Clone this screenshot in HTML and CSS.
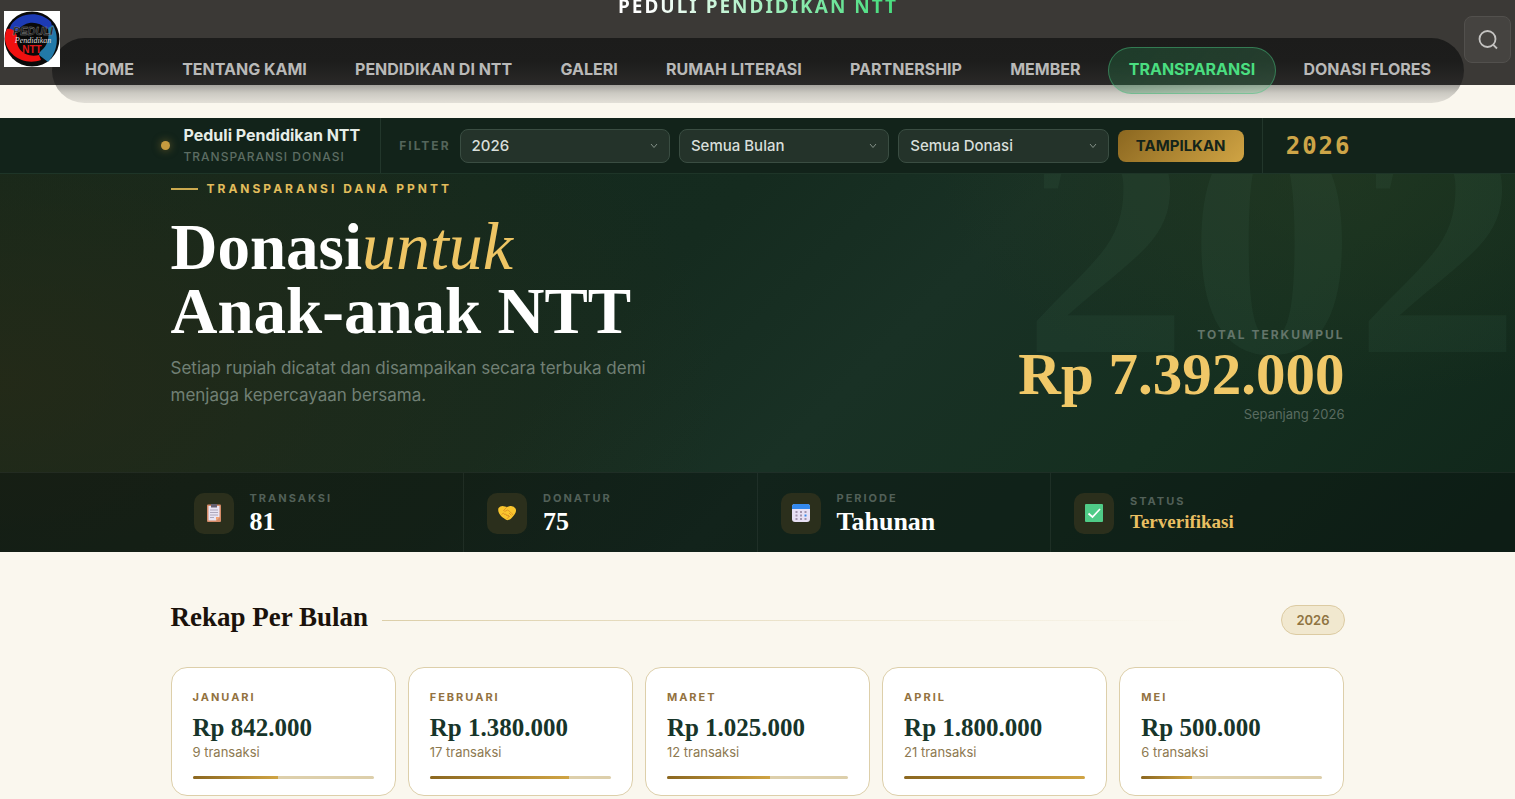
FILE: index.html
```html
<!DOCTYPE html>
<html lang="id">
<head>
<meta charset="utf-8">
<meta name="viewport" content="width=device-width, initial-scale=1">
<title>Transparansi Donasi - Peduli Pendidikan NTT</title>
<link rel="stylesheet" href="styles.css">
</head>
<body>
<header class="site-header">
  <a class="logo" href="#" aria-label="Beranda">
    <svg viewBox="0 0 56 56" width="56" height="56">
      <rect width="56" height="56" fill="#fff"/>
      <circle cx="28" cy="28" r="27.500" fill="#090909"/>
      <path d="M7 14C15 2 35-1 47 11l1 4-5 3C34 10 22 9 13 20L5 19Z" fill="#1d3bb5"/>
      <path d="M3 18c4-1 8 1 10 7-2 14 9 22 22 19l2 5C20 55 3 44 1 29c0-4 0-8 2-11Z" fill="#f01010"/>
      <path d="M49 14c7 12 4 28-5 37l-9-7c0-3 2-4 4-6 6-6 6-13 5-21Z" fill="#2279a8"/>
      <text class="logo-a" x="29" y="24" text-anchor="middle">PEDULI</text>
      <text class="logo-b" x="29" y="32" text-anchor="middle">Pendidikan</text>
      <text class="logo-c" x="28" y="42" text-anchor="middle">NTT</text>
    </svg>
  </a>
  <div class="header-main">
    <p class="site-title"><span>PEDULI PENDIDIKAN NTT</span></p>
    <nav class="main-nav">
      <a href="#">HOME</a>
      <a href="#">TENTANG KAMI</a>
      <a href="#">PENDIDIKAN DI NTT</a>
      <a href="#">GALERI</a>
      <a href="#">RUMAH LITERASI</a>
      <a href="#">PARTNERSHIP</a>
      <a href="#">MEMBER</a>
      <a href="#" class="active">TRANSPARANSI</a>
      <a href="#">DONASI FLORES</a>
    </nav>
  </div>
  <button class="search" type="button" aria-label="Cari">
    <svg viewBox="0 0 20 20" width="20" height="20" fill="none" stroke="#c4c3c1" stroke-width="1.800"><circle cx="9.500" cy="9" r="8"/><path d="m15.300 14.800 3.700 3.700"/></svg>
  </button>
</header>

<main>
<form class="filter-bar">
  <div class="filter-inner">
    <div class="brand">
      <span class="dot"></span>
      <div><strong>Peduli Pendidikan NTT</strong><small>TRANSPARANSI DONASI</small></div>
    </div>
    <div class="filters">
      <label class="filter-label" for="tahun">FILTER</label>
      <div class="select-box">
        <select id="tahun"><option>2026</option></select>
        <svg viewBox="0 0 8 6" width="8" height="6"><path d="m1 1 3 3.500 3-3.500"/></svg>
      </div>
      <div class="select-box">
        <select aria-label="Bulan"><option>Semua Bulan</option></select>
        <svg viewBox="0 0 8 6" width="8" height="6"><path d="m1 1 3 3.500 3-3.500"/></svg>
      </div>
      <div class="select-box">
        <select aria-label="Jenis donasi"><option>Semua Donasi</option></select>
        <svg viewBox="0 0 8 6" width="8" height="6"><path d="m1 1 3 3.500 3-3.500"/></svg>
      </div>
      <button class="submit" type="button">TAMPILKAN</button>
    </div>
    <div class="year">2026</div>
  </div>
</form>

<section class="hero">
  <div class="watermark" aria-hidden="true">2026</div>
  <div class="hero-inner">
    <div>
      <p class="eyebrow">TRANSPARANSI DANA PPNTT</p>
      <h1>Donasi<em>untuk</em><br>Anak-anak NTT</h1>
      <p class="lead">Setiap rupiah dicatat dan disampaikan secara terbuka demi menjaga kepercayaan bersama.</p>
    </div>
    <div class="total">
      <p class="total-label">TOTAL TERKUMPUL</p>
      <p class="total-amount">Rp 7.392.000</p>
      <p class="total-note">Sepanjang 2026</p>
    </div>
  </div>
  <div class="stats">
    <div class="stats-inner">
      <div class="stat">
        <span class="stat-icon"><svg viewBox="0 0 18 18" width="18" height="18"><rect x="2" y="0.500" width="14" height="17.500" rx="1" fill="#d58b68"/><path d="M3.500 2h11v11l-3.500 3.500H3.500z" fill="#e9e4f3"/><path d="M11 16.500V13h3.500z" fill="#f5a06f"/><path d="M6 0h6v3.500H6z" fill="#655f70"/><path d="M5 6h8M5 8.500h8M5 11h8M5 13.500h4" stroke="#a79fb6" stroke-width=".9"/></svg></span>
        <div><p class="stat-label">TRANSAKSI</p><p class="stat-value">81</p></div>
      </div>
      <div class="stat">
        <span class="stat-icon"><svg viewBox="0 0 18 18" width="18" height="18"><path d="M.500 4Q3 1 7 2.500L9 3l3-1q4-.500 5.500 2.500c1.500 3-.500 6-3 8.500-2 2.500-4 3.500-6 3L4 13C1 10-.500 7 .500 4Z" fill="#f9c52e"/><path d="M9 3 5.500 6.500q1 2 4-.500c2 1 4 3 5.500 5M3.500 10.500l2-1.500 1 1.500 1.500-.500.500 1.500 1.500-.300.500 2-2 2M12 13l-2-2M13.500 11.500l-2.500-2.500" fill="none" stroke="#d98520" stroke-width=".7"/></svg></span>
        <div><p class="stat-label">DONATUR</p><p class="stat-value">75</p></div>
      </div>
      <div class="stat">
        <span class="stat-icon"><svg viewBox="0 0 18 18" width="18" height="18"><rect width="18" height="18" rx="3" fill="#e7e0f4"/><path d="M0 5V2.500Q0 0 2.500 0h13Q18 0 18 2.500V5z" fill="#3489ee"/><g fill="#a294ad"><path d="M3.500 7h2v2h-2zM8 7h2v2H8zM3.500 10.500h2v2h-2zM8 10.500h2v2H8zM3.500 14h2v2h-2zM8 14h2v2H8zM12.500 7h2v2h-2zM12.500 14h2v2h-2z"/></g><path d="M12.500 10.500h2v2h-2z" fill="#3489ee"/></svg></span>
        <div><p class="stat-label">PERIODE</p><p class="stat-value">Tahunan</p></div>
      </div>
      <div class="stat">
        <span class="stat-icon"><svg viewBox="0 0 18 18" width="18" height="18"><rect width="18" height="18" rx="1" fill="#4fcb87"/><path d="m3.500 9.500 4 3.500L15 5" fill="none" stroke="#fff" stroke-width="1.700"/></svg></span>
        <div><p class="stat-label">STATUS</p><p class="stat-value verified">Terverifikasi</p></div>
      </div>
    </div>
  </div>
</section>

<section class="recap">
  <div class="recap-head">
    <h2>Rekap Per Bulan</h2>
    <span class="rule"></span>
    <span class="badge">2026</span>
  </div>
  <div class="cards">
    <article class="card"><h3>JANUARI</h3><p class="amount">Rp 842.000</p><p class="count">9 transaksi</p><div class="bar"><div style="width:47%"></div></div></article>
    <article class="card"><h3>FEBRUARI</h3><p class="amount">Rp 1.380.000</p><p class="count">17 transaksi</p><div class="bar"><div style="width:77%"></div></div></article>
    <article class="card"><h3>MARET</h3><p class="amount">Rp 1.025.000</p><p class="count">12 transaksi</p><div class="bar"><div style="width:57%"></div></div></article>
    <article class="card"><h3>APRIL</h3><p class="amount">Rp 1.800.000</p><p class="count">21 transaksi</p><div class="bar"><div style="width:100%"></div></div></article>
    <article class="card"><h3>MEI</h3><p class="amount">Rp 500.000</p><p class="count">6 transaksi</p><div class="bar"><div style="width:28%"></div></div></article>
  </div>
</section>
</main>
</body>
</html>
```
FILE: styles.css
```css
* { box-sizing: border-box; }
body {
  margin: 0;
  background: #faf7ee;
  color: #1a120b;
  font-family: Inter, "Liberation Sans", sans-serif;
  overflow-x: hidden;
}
p, h1, h2, h3 { margin: 0; }
a { color: inherit; text-decoration: none; }

/* Header */
.site-header {
  display: flex;
  justify-content: space-between;
  height: 85px;
  margin-bottom: 33px;
  padding: 0 4px;
  background: #3b3936;
}
.logo { flex: none; width: 48px; margin-top: 11px; }
.logo svg { display: block; overflow: visible; position: relative; z-index: 2; width: 56px; }
.logo-a { font: italic bold 11px "Liberation Sans", sans-serif; fill: #111; stroke: #888; stroke-width: .4; }
.logo-b { font: italic 8px "Liberation Serif", serif; fill: #ddd; }
.logo-c { font: bold 10px "Liberation Sans", sans-serif; fill: #e01818; }
.header-main { flex: 1; min-width: 0; }
.site-title {
  margin-top: -8px;
  height: 46px;
  text-align: center;
  font: 700 19px/28px "Noto Sans", sans-serif;
  letter-spacing: 2px;
}
.site-title span {
  background: linear-gradient(90deg, #fff 10%, #4ade80 95%);
  background-clip: text;
  -webkit-background-clip: text;
  color: transparent;
}
.main-nav {
  display: flex;
  justify-content: space-between;
  padding: 9px 12px;
  border-radius: 33px;
  background: linear-gradient(#1c1c1b 0, #1d1d1c 24px, #2a2928 47px, #a5a39e 47px, #cbc9c2 55px, #e2dfd7 65px);
}
.main-nav a {
  padding: 0 20px 2px;
  border: 1px solid transparent;
  border-radius: 24px;
  font-size: 16px;
  font-weight: 700;
  line-height: 43px;
  color: #b9b9b8;
  white-space: nowrap;
}
.main-nav .active {
  color: #4ade80;
  border-color: rgba(74, 200, 130, .45);
  background: linear-gradient(135deg, rgba(34, 120, 70, .35), rgba(74, 190, 120, .2));
}
.search {
  display: grid;
  place-items: center;
  flex: none;
  width: 47px;
  height: 47px;
  margin-top: 16px;
  padding: 0;
  border: 1px solid #52504d;
  border-radius: 8px;
  background: #454340;
}

/* Filter bar */
.filter-bar { background: #12231a; border-bottom: 1px solid #1e3528; }
.filter-inner {
  display: flex;
  max-width: 1194px;
  height: 55px;
  margin: 0 auto;
}
.brand {
  display: flex;
  align-items: center;
  gap: 14px;
  padding-right: 20px;
  border-right: 1px solid #22362b;
}
.brand strong { display: block; font-size: 16px; line-height: 20px; color: #e6ede7; white-space: nowrap; }
.brand small { display: block; padding-top: 2px; font-size: 12px; font-weight: 500; line-height: 20px; letter-spacing: 1px; color: #5d6d63; white-space: nowrap; }
.dot { width: 9px; height: 9px; border-radius: 50%; background: #c59a3f; box-shadow: 0 0 8px rgba(201, 155, 60, .5); }
.filters { flex: 1; display: flex; align-items: center; gap: 9px; padding: 0 18px; }
.filter-label { font-size: 12px; font-weight: 700; letter-spacing: 2px; color: #54655b; }
.select-box { flex: 1; display: grid; align-items: center; }
.select-box select {
  grid-area: 1 / 1;
  appearance: none;
  width: 100%;
  height: 34px;
  padding: 0 11px;
  border: 1px solid #3a4d42;
  border-radius: 8px;
  background: #24332a;
  color: #d8dfda;
  font: 500 15px Inter, sans-serif;
}
.select-box svg { grid-area: 1 / 1; justify-self: end; margin-right: 12px; pointer-events: none; fill: none; stroke: #849188; }
.submit {
  width: 126px;
  height: 32px;
  padding: 0;
  border: 0;
  border-radius: 8px;
  background: linear-gradient(135deg, #8b6720, #d0a444);
  color: #14241a;
  font: 700 15px Inter, sans-serif;
}
.year {
  padding: 0 3px 0 23px;
  border-left: 1px solid #22362b;
  font: bold 24px/56px "DejaVu Sans Mono", monospace;
  letter-spacing: 2px;
  color: #cda548;
}

/* Hero */
.hero {
  position: relative;
  overflow: hidden;
  background:
    radial-gradient(ellipse 48% 110% at 0 55%, rgba(42, 42, 22, .7), transparent),
    radial-gradient(ellipse 26% 60% at 88% 0, rgba(40, 60, 32, .5), transparent),
    linear-gradient(135deg, #12281c 0%, #152b1f 40%, #193125 56%, #152f20 75%, #10261a 100%);
}
.watermark {
  position: absolute;
  top: -100px;
  left: 67.5%;
  font: bold 332px/332px "Liberation Serif", serif;
  color: rgba(120, 180, 150, .06);
}
.hero-inner {
  display: flex;
  justify-content: space-between;
  align-items: flex-end;
  max-width: 1174px;
  margin: 0 auto;
  padding: 6px 0 49px;
  position: relative;
}
.eyebrow {
  display: flex;
  align-items: center;
  gap: 9px;
  font-size: 12px;
  font-weight: 700;
  line-height: 18px;
  letter-spacing: 3px;
  color: #e2bd5c;
}
.eyebrow::before { content: ""; width: 27px; height: 2px; background: #cba94f; }
h1 {
  margin: 17px 0 12px;
  font: bold 65px/64px "Liberation Serif", serif;
  color: #fff;
}
h1 em { font-weight: 400; font-size: 68px; line-height: 1px; color: #eec564; }
.lead { max-width: 490px; padding-bottom: 14px; font-size: 17px; line-height: 27px; color: #718075; }
.total { text-align: right; }
.total-label { font-size: 12px; font-weight: 700; line-height: 16px; letter-spacing: 2px; color: #63756a; }
.total-amount { font: bold 59px/62px "Liberation Serif", serif; color: #f0c868; white-space: nowrap; }
.total-note { font-size: 13px; line-height: 18px; color: #596b60; }
.stats { position: relative; border-top: 1px solid rgba(255, 255, 255, .06); background: rgba(10, 16, 14, .42); }
.stats-inner { display: grid; grid-template-columns: repeat(4, 1fr); max-width: 1174px; margin: 0 auto; }
.stat {
  display: flex;
  align-items: center;
  gap: 16px;
  height: 79px;
  padding: 1px 23px 0;
  border-right: 1px solid rgba(255, 255, 255, .06);
}
.stat:last-child { border-right: 0; }
.stat-icon { display: grid; place-items: center; width: 40px; height: 41px; border-radius: 10px; background: #2b2f1c; }
.stat-label { font-size: 11px; font-weight: 700; line-height: 18px; letter-spacing: 2px; color: #526058; }
.stat-value { font: bold 26px/30px "Liberation Serif", serif; color: #fff; }
.stat-value.verified { font-size: 19px; line-height: 24px; color: #e9bf62; }

/* Monthly recap */
.recap { max-width: 1174px; margin: 0 auto; padding: 53px 0 40px; }
.recap-head { display: flex; align-items: center; gap: 14px; margin-bottom: 32px; }
h2 { margin-bottom: 6px; font: bold 27px/24px "Liberation Serif", serif; }
.rule { flex: 1; height: 1px; background: linear-gradient(90deg, #dccfa9, rgba(220, 207, 169, 0) 92%); }
.badge {
  padding: 0 14px;
  border: 1px solid #dccba2;
  border-radius: 15px;
  background: #f1e8cf;
  font-size: 13px;
  font-weight: 600;
  line-height: 28px;
  color: #8f7442;
}
.cards { display: grid; grid-template-columns: repeat(5, 1fr); gap: 12px; }
.card { padding: 20px 21px 16px; border: 1px solid #ddcfaa; border-radius: 16px; background: #fff; }
.card h3 { font-size: 11px; line-height: 18px; letter-spacing: 2px; color: #93723f; }
.amount { margin-top: 8px; font: bold 25px/28px "Liberation Serif", serif; color: #17352a; white-space: nowrap; }
.count { font-size: 13px; line-height: 20px; color: #8d7950; }
.bar { height: 3px; margin-top: 14px; border-radius: 2px; background: #ddcfab; overflow: hidden; }
.bar div { height: 100%; background: linear-gradient(90deg, #8b6720, #d0a444); }
```
